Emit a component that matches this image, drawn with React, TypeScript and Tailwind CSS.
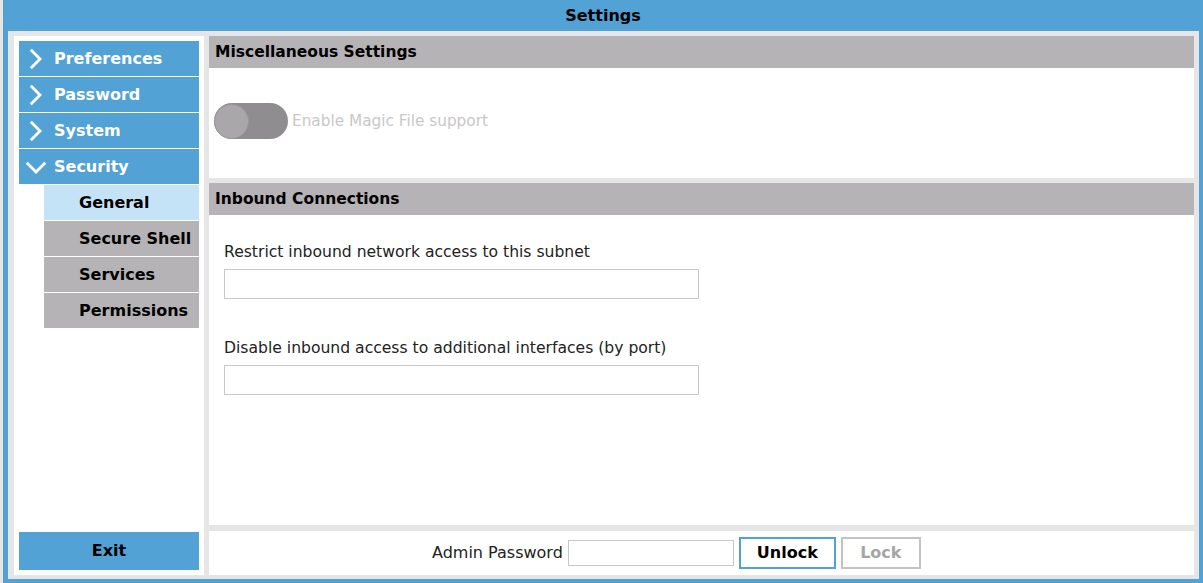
import React from "react";

const font = { fontFamily: '"DejaVu Sans", "Liberation Sans", sans-serif' };

const Chevron = ({ open }: { open?: boolean }) =>
  open ? (
    <svg width="22" height="13" viewBox="0 0 22 13" className="shrink-0 mt-[2px]">
      <polyline points="1.8,1.8 11,11 20.2,1.8" fill="none" stroke="white" strokeWidth="2.8" />
    </svg>
  ) : (
    <svg width="14" height="22" viewBox="0 0 14 22" className="shrink-0">
      <polyline points="1.8,1.8 11,11 1.8,20.2" fill="none" stroke="white" strokeWidth="2.8" />
    </svg>
  );

const NavItem = ({ label, open }: { label: string; open?: boolean }) => (
  <div className={`h-[35px] bg-[#52a2d5] flex items-center text-white font-bold text-[16px] ${open ? "pl-[6px] gap-[7px]" : "pl-[10px] gap-[11px]"}`}>
    <Chevron open={open} />
    <span>{label}</span>
  </div>
);

const SubItem = ({ label, active }: { label: string; active?: boolean }) => (
  <div className={`h-[35px] ml-[25px] flex items-center pl-[35px] text-black font-bold text-[16px] ${active ? "bg-[#c5e3f6]" : "bg-[#b5b3b6]"}`}>
    {label}
  </div>
);

export default function App() {
  return (
    <div className="w-[1203px] h-[583px] bg-[#e6e6e6] pl-[3px] overflow-hidden" style={font}>
      <div className="w-[1200px] h-[583px] bg-[#52a2d5] flex flex-col">
        <div className="h-[31px] flex items-center justify-center text-[16px] text-black font-bold">Settings</div>
        <div className="flex-1 ml-[5px] mr-[4px] mb-[4px] bg-[#e6e6e6] flex gap-[5px] pl-[6px] pt-[5px] pr-[5px] pb-[4px]">
          <aside className="w-[190px] bg-white p-[5px] flex flex-col">
            <div className="flex flex-col gap-[1px]">
              <NavItem label="Preferences" />
              <NavItem label="Password" />
              <NavItem label="System" />
              <NavItem label="Security" open />
              <SubItem label="General" active />
              <SubItem label="Secure Shell" />
              <SubItem label="Services" />
              <SubItem label="Permissions" />
            </div>
            <div className="flex-1" />
            <button className="h-[38px] bg-[#52a2d5] text-black font-bold text-[16px]">Exit</button>
          </aside>
          <main className="flex-1 flex flex-col">
            <section className="h-[142px] flex flex-col bg-white">
              <div className="h-[32px] bg-[#b5b3b6] flex items-center pl-[6px] pt-[1px] text-[15.5px] font-bold text-black">Miscellaneous Settings</div>
              <div className="flex-1 flex items-center pl-[5px] pb-[4px]">
                <div className="w-[74px] h-[36px] rounded-full bg-[#8f8d90] flex items-center">
                  <div className="w-[35px] h-[35px] rounded-full bg-[#a9a7aa] border border-[#9a989b]" />
                </div>
                <span className="ml-[4px] text-[15.3px] text-[#c8c8c8]">Enable Magic File support</span>
              </div>
            </section>
            <section className="mt-[5px] flex-1 flex flex-col bg-white">
              <div className="h-[32px] bg-[#b5b3b6] flex items-center pl-[6px] pt-[1px] text-[15.5px] font-bold text-black">Inbound Connections</div>
              <div className="pl-[15px] pt-[27px] flex flex-col">
                <label className="text-[15.6px] text-[#222] leading-[20px]">Restrict inbound network access to this subnet</label>
                <input className="mt-[7px] w-[475px] h-[30px] border border-[#c8c8c8] bg-white outline-none" />
                <label className="mt-[39px] text-[15.6px] text-[#222] leading-[20px]">Disable inbound access to additional interfaces (by port)</label>
                <input className="mt-[7px] w-[475px] h-[30px] border border-[#c8c8c8] bg-white outline-none" />
              </div>
            </section>
            <div className="mt-[6px] h-[44px] bg-white flex items-center pl-[223px]">
              <span className="text-[16px] text-[#222]">Admin Password</span>
              <input type="password" className="ml-[5px] w-[166px] h-[26px] border border-[#c8c8c8] bg-white outline-none" />
              <button className="ml-[5px] w-[97px] h-[32px] border-2 border-[#52a2d5] bg-white text-black font-bold text-[16px]">Unlock</button>
              <button className="ml-[5px] w-[80px] h-[32px] border-2 border-[#c3c3c3] bg-white text-[#a5a5a5] font-bold text-[16px]">Lock</button>
            </div>
          </main>
        </div>
      </div>
    </div>
  );
}
